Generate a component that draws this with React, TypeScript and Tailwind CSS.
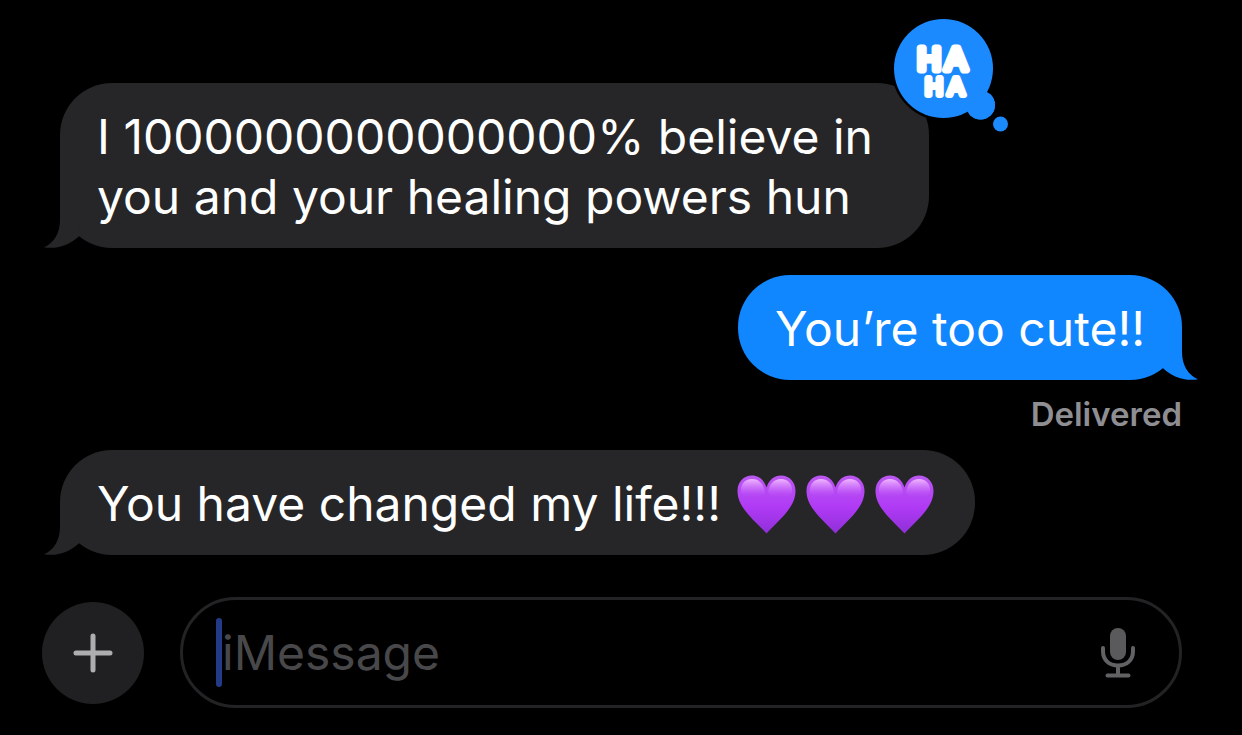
import React, { useState } from 'react';

interface Message {
  id: number;
  text: string;
  fromMe: boolean;
  hearts?: number;
  reaction?: string;
  status?: string;
}

const messages: Message[] = [
  { id: 1, text: 'I 1000000000000000% believe in you and your healing powers hun', fromMe: false, reaction: 'haha' },
  { id: 2, text: 'You’re too cute!!', fromMe: true, status: 'Delivered' },
  { id: 3, text: 'You have changed my life!!!', fromMe: false, hearts: 3 },
];

const Tail: React.FC<{ fromMe: boolean }> = ({ fromMe }) => (
  <svg
    viewBox="0 0 36 53"
    aria-hidden="true"
    className={
      fromMe
        ? 'absolute bottom-0 -right-4 w-9 h-[53px] -scale-x-100 text-[#1086ff]'
        : 'absolute bottom-0 -left-4 w-9 h-[53px] text-[#262628]'
    }
  >
    <path d="M16 0V25C16 38 10 48 0 52.3C14 54.5 26 49.5 35 41.2L36 30Z" fill="currentColor" />
  </svg>
);

const HahaReaction = () => (
  <svg viewBox="0 0 120 120" role="img" aria-label="Haha" className="absolute -top-[68px] -right-[81px] w-[120px] h-[120px]">
    <g fill="#1c8aff" stroke="#000" strokeWidth="5" paintOrder="stroke">
      <circle cx="90.5" cy="90" r="14.5" />
      <circle cx="53.5" cy="53.5" r="49.5" />
      <circle cx="110.5" cy="109" r="7.5" />
    </g>
    <circle cx="90.5" cy="90" r="14.5" fill="#1c8aff" />
    <g
      fill="#fff"
      stroke="#fff"
      strokeLinejoin="round"
      strokeLinecap="round"
      textAnchor="middle"
      className="font-['Liberation_Sans',sans-serif]"
    >
      <text x="39 66" y="55" fontSize="32" strokeWidth="7">HA</text>
      <text x="44 66" y="80" fontSize="24" strokeWidth="6">HA</text>
    </g>
  </svg>
);

const HeartDefs = () => (
  <svg className="absolute w-0 h-0" aria-hidden="true">
    <defs>
      <linearGradient id="heartFill" x1="0" y1="0" x2="0" y2="1">
        <stop offset="0" stopColor="#bc58f2" />
        <stop offset="0.55" stopColor="#b03af5" />
        <stop offset="1" stopColor="#8f2fd8" />
      </linearGradient>
      <linearGradient id="heartShine" x1="0" y1="0" x2="0" y2="1">
        <stop offset="0" stopColor="#f3bcff" stopOpacity="0.95" />
        <stop offset="0.5" stopColor="#d27cfb" stopOpacity="0.6" />
        <stop offset="1" stopColor="#b440f6" stopOpacity="0" />
      </linearGradient>
    </defs>
  </svg>
);

const PurpleHeart = () => (
  <svg viewBox="0 0 59 59" role="img" aria-label="Purple heart" className="w-[59px] h-[59px]">
    <path
      d="M29.5 12.5C27 4.5 21.5 0.5 15 0.5C6.5 0.5 0.5 7 0.5 16C0.5 32 15 43 29.5 58.5C44 43 58.5 32 58.5 16C58.5 7 52.5 0.5 44 0.5C37.5 0.5 32 4.5 29.5 12.5Z"
      fill="url(#heartFill)"
    />
    <path d="M4 18C3 9 8 4 15 4C22 4 27 9 28 18C22 25 10 26 4 18Z" fill="url(#heartShine)" />
    <path d="M55 18C56 9 51 4 44 4C37 4 32 9 31 18C37 25 49 26 55 18Z" fill="url(#heartShine)" />
  </svg>
);

const Bubble: React.FC<{ message: Message }> = ({ message }) => {
  const { text, fromMe, hearts, reaction, status } = message;

  return (
    <li className={fromMe ? 'flex flex-col items-end' : 'flex flex-col items-start'}>
      <div
        className={
          fromMe
            ? 'relative rounded-[52px] bg-[#1086ff] px-[37px] pt-6 pb-[21px]'
            : 'relative rounded-[52px] bg-[#262628] px-[37px] pt-6 pb-[21px]'
        }
      >
        <Tail fromMe={fromMe} />
        <div className="flex items-center gap-4">
          <p className="max-w-[795px]">{text}</p>
          {hearts && (
            <span className="flex gap-[10px] pr-1">
              {Array.from({ length: hearts }, (_, i) => (
                <PurpleHeart key={i} />
              ))}
            </span>
          )}
        </div>
        {reaction === 'haha' && <HahaReaction />}
      </div>
      {status && <p className="mt-[14px] text-[33px] leading-10 font-semibold text-[#8e8e93]">{status}</p>}
    </li>
  );
};

export default function App() {
  const [draft, setDraft] = useState('');

  return (
    <main className="min-h-screen bg-black font-['Inter',sans-serif] text-[48px] leading-[60px] text-white">
      <HeartDefs />
      <ul className="flex flex-col px-[60px] pt-[83px]">
        {messages.map((m) => (
          <React.Fragment key={m.id}>
            <Bubble message={m} />
            {m.id === 1 && <li className="h-[27px]" aria-hidden="true" />}
            {m.id === 2 && <li className="h-4" aria-hidden="true" />}
          </React.Fragment>
        ))}
      </ul>

      <form
        className="mt-[42px] flex items-center gap-9 pl-[42px] pr-[60px] pb-[26px]"
        onSubmit={(e) => e.preventDefault()}
      >
        <button
          type="button"
          aria-label="Add attachment"
          className="flex size-[102px] shrink-0 items-center justify-center rounded-full bg-[#202022]"
        >
          <svg viewBox="0 0 40 40" className="size-10" stroke="#aeaeb0" strokeWidth="5" strokeLinecap="round">
            <path d="M20 3V37M3 20H37" />
          </svg>
        </button>

        <div className="flex h-[111px] min-w-0 flex-1 items-center rounded-full border-[3px] border-[#232325] pl-[33px] pr-[43px]">
          {!draft && <span className="h-[69px] w-[6px] shrink-0 rounded-full bg-[#233b86]" />}
          <input
            type="text"
            aria-label="iMessage"
            placeholder="iMessage"
            value={draft}
            onChange={(e) => setDraft(e.target.value)}
            className="min-w-0 flex-1 bg-transparent text-white placeholder:text-[#48484a] outline-none"
          />
          <button type="button" aria-label="Dictate" className="shrink-0">
            <svg viewBox="0 0 36 52" className="h-[52px] w-9" fill="none" strokeLinecap="round">
              <rect x="10" y="1" width="16" height="32" rx="8" fill="#5a5a5c" />
              <path d="M3 21V24C3 33 9 38.5 18 38.5C27 38.5 33 33 33 24V21M18 39V48M7.5 48.5H28.5" stroke="#626264" strokeWidth="4" />
            </svg>
          </button>
        </div>
      </form>
    </main>
  );
}
